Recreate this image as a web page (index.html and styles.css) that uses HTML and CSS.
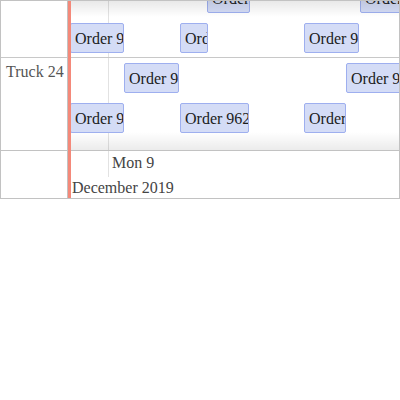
FILE: index.html
```html
<!DOCTYPE html>
<html>
<head>
<meta charset="utf-8">
<link rel="stylesheet" href="styles.css">
</head>
<body>
<div class="scheduler">
  <div class="body">
    <div class="res-pane">
      <div class="scroll">
        <div class="res-row row-a"></div>
        <div class="res-row row-b">Truck 24</div>
      </div>
    </div>
    <div class="time-pane">
      <div class="scroll">
        <div class="time-row row-a">
          <div class="event lane1" style="left:139px;width:43px">Order 9</div>
          <div class="event lane1" style="left:292px;width:60px">Order 9</div>
          <div class="event lane2" style="left:2px;width:54px">Order 9</div>
          <div class="event lane2" style="left:112px;width:28px">Order 9</div>
          <div class="event lane2" style="left:236px;width:55px">Order 9</div>
        </div>
        <div class="time-row row-b">
          <div class="event lane1" style="left:56px;width:55px">Order 9</div>
          <div class="event lane1" style="left:278px;width:70px">Order 9</div>
          <div class="event lane2" style="left:2px;width:54px">Order 9</div>
          <div class="event lane2" style="left:112px;width:69px">Order 962</div>
          <div class="event lane2" style="left:236px;width:42px">Order 9</div>
        </div>
      </div>
      <div class="shade-top"></div>
      <div class="shade-bottom"></div>
    </div>
  </div>
  <div class="footer">
    <div class="res-foot"></div>
    <div class="axis">
      <div class="days"><div class="day">Mon 9</div></div>
      <div class="month">December 2019</div>
    </div>
  </div>
  <div class="now-line"></div>
</div>
</body>
</html>
```
FILE: styles.css
```css
html, body {
  margin: 0;
  padding: 0;
  background: #fff;
}
body {
  font-family: "Liberation Serif", "Times New Roman", serif;
  font-size: 16px;
}
.scheduler {
  position: relative;
  width: 400px;
  height: 199px;
  box-sizing: border-box;
  border: 1px solid #c2c2c2;
  display: flex;
  flex-direction: column;
}
.body {
  display: grid;
  grid-template-columns: 67px 1fr;
  height: 149px;
}
.res-pane {
  border-right: 1px solid #c2c2c2;
  overflow: hidden;
}
.time-pane {
  position: relative;
  overflow: hidden;
}
.scroll {
  margin-top: -23px;
}
.res-row, .time-row {
  border-bottom: 1px solid #c8c8c8;
}
.row-a {
  height: 79px;
}
.row-b {
  height: 100px;
}
.res-row.row-b {
  color: #555;
  padding: 5px 0 0 5px;
  box-sizing: border-box;
}
.time-row {
  position: relative;
  background: linear-gradient(#e2e2e2, #e2e2e2) no-repeat 40px 0 / 1px 100%;
}
.event {
  position: absolute;
  height: 30px;
  box-sizing: border-box;
  background: #d4dcf6;
  border: 1px solid #9eafef;
  border-radius: 2px;
  padding: 1px 0 0 4px;
  display: flex;
  align-items: center;
  overflow: hidden;
  white-space: nowrap;
  color: #1c1c1c;
}
.lane1 { top: 5px; }
.lane2 { top: 45px; }
.shade-top {
  position: absolute;
  left: 0; right: 0; top: 0;
  height: 16px;
  background: linear-gradient(rgba(0,0,0,0.09), rgba(0,0,0,0));
}
.shade-bottom {
  position: absolute;
  left: 0; right: 0; bottom: 0;
  height: 18px;
  background: linear-gradient(rgba(0,0,0,0), rgba(0,0,0,0.08));
}
.footer {
  display: grid;
  grid-template-columns: 67px 1fr;
  border-top: 1px solid #c2c2c2;
  flex: 1;
}
.res-foot {
  border-right: 1px solid #c2c2c2;
}
.axis {
  color: #444;
}
.days {
  height: 26px;
  padding-left: 40px;
}
.day {
  height: 100%;
  box-sizing: border-box;
  border-left: 1px solid #e2e2e2;
  padding: 3px 0 0 3px;
}
.month {
  padding: 2px 0 0 4px;
}
.now-line {
  position: absolute;
  left: 67px;
  top: 0;
  bottom: 0;
  width: 3px;
  background: #f4897a;
}
```
